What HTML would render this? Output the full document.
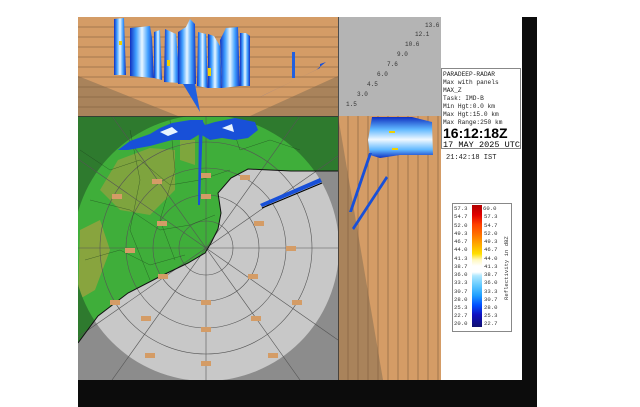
<!DOCTYPE html>
<html><head><meta charset="utf-8"><style>
html,body{margin:0;padding:0;background:#fff;width:640px;height:407px;overflow:hidden}
svg{display:block}
text{font-family:"Liberation Mono",monospace}
</style></head><body>
<svg width="640" height="407" viewBox="0 0 640 407" xmlns="http://www.w3.org/2000/svg">
<defs>
<clipPath id="mp"><rect x="78" y="116" width="260" height="264"/></clipPath>
<clipPath id="cir"><circle cx="206" cy="248" r="133"/></clipPath>
<linearGradient id="cb" x1="0" y1="0" x2="0" y2="1">
<stop offset="0" stop-color="#b00000"/><stop offset="0.08" stop-color="#e00000"/><stop offset="0.16" stop-color="#ff4000"/><stop offset="0.24" stop-color="#ff7000"/><stop offset="0.32" stop-color="#ffa800"/><stop offset="0.40" stop-color="#ffe000"/><stop offset="0.45" stop-color="#fff8c0"/><stop offset="0.5" stop-color="#fff"/><stop offset="0.55" stop-color="#fff"/><stop offset="0.58" stop-color="#b0e8ff"/><stop offset="0.66" stop-color="#60c8ff"/><stop offset="0.74" stop-color="#20a0ff"/><stop offset="0.82" stop-color="#0050ff"/><stop offset="0.9" stop-color="#1010c0"/><stop offset="1" stop-color="#101070"/>
</linearGradient>
<linearGradient id="col" x1="0" y1="0" x2="1" y2="0">
<stop offset="0" stop-color="#1030c0"/><stop offset="0.25" stop-color="#40a0ff"/><stop offset="0.5" stop-color="#e8f6ff"/><stop offset="0.75" stop-color="#40a0ff"/><stop offset="1" stop-color="#1030c0"/>
</linearGradient>
<linearGradient id="rh" x1="0" y1="0" x2="0" y2="1">
<stop offset="0" stop-color="#1030c0"/><stop offset="0.3" stop-color="#60b8ff"/><stop offset="0.55" stop-color="#f0f8ff"/><stop offset="0.8" stop-color="#60b8ff"/><stop offset="1" stop-color="#1030c0"/>
</linearGradient>
</defs>
<rect x="78" y="380" width="459" height="27" fill="#0c0c0c"/>
<rect x="522" y="17" width="15" height="390" fill="#0c0c0c"/>
<!-- top panel -->
<rect x="78" y="17" width="260" height="99" fill="#d49c66"/>
<polygon points="78,76 178,116 250,116 338,76 338,116 78,116" fill="#a9835b"/>
<g stroke="#7a5a3a" stroke-width="0.8" opacity="0.7">
<line x1="78" y1="27" x2="338" y2="27"/><line x1="78" y1="37" x2="338" y2="37"/><line x1="78" y1="47" x2="338" y2="47"/><line x1="78" y1="57" x2="338" y2="57"/><line x1="78" y1="67" x2="338" y2="67"/><line x1="78" y1="77" x2="338" y2="77"/><line x1="78" y1="87" x2="338" y2="87"/><line x1="78" y1="97" x2="338" y2="97"/><line x1="78" y1="107" x2="338" y2="107"/>
</g>
<g>
<path d="M114,19 L124,18 L126,75 L114,75 Z" fill="url(#col)"/>
<path d="M130,28 L150,26 L152,38 L154,78 L130,76 Z" fill="url(#col)"/>
<path d="M154,32 L160,30 L162,80 L154,78 Z" fill="url(#col)"/>
<path d="M165,29 L176,34 L180,83 L164,82 Z" fill="url(#col)"/>
<path d="M178,32 L186,27 L190,19 L195,24 L196,84 L178,84 Z" fill="url(#col)"/>
<path d="M183,84 L195,84 L200,112 Z" fill="#2060e0"/>
<path d="M198,32 L206,34 L208,88 L197,86 Z" fill="url(#col)"/>
<path d="M208,34 L214,36 L220,46 L222,88 L208,88 Z" fill="url(#col)"/>
<path d="M220,40 L226,28 L238,27 L240,86 L222,88 Z" fill="url(#col)"/>
<path d="M240,33 L246,33 L250,36 L250,86 L240,86 Z" fill="url(#col)"/>
<rect x="119" y="41" width="3" height="4" fill="#f0d000"/><rect x="167" y="60" width="3" height="6" fill="#f0d000"/><rect x="208" y="68" width="3" height="8" fill="#f0d000"/>
<rect x="292" y="52" width="3" height="26" fill="#2060e0"/>
<path d="M258,98 L320,68 L320,64 L326,62 L316,70 L264,95 Z" fill="#1850d8"/>
</g>
<rect x="338" y="17" width="103" height="99" fill="#b4b4b4"/>
<g font-size="6" fill="#333">
<text x="425" y="27">13.6</text><text x="415" y="36">12.1</text><text x="405" y="46">10.6</text><text x="397" y="56">9.0</text><text x="387" y="66">7.6</text><text x="377" y="76">6.0</text><text x="367" y="86">4.5</text><text x="357" y="96">3.0</text><text x="346" y="106">1.5</text>
</g>
<!-- right panel -->
<rect x="338" y="116" width="103" height="264" fill="#d49c66"/>
<polygon points="338,116 338,380 383,380" fill="#a9835b"/>
<g stroke="#7a5a3a" stroke-width="0.8" opacity="0.7">
<line x1="348" y1="116" x2="348" y2="380"/><line x1="358" y1="116" x2="358" y2="380"/><line x1="368" y1="116" x2="368" y2="380"/><line x1="378" y1="116" x2="378" y2="380"/><line x1="388" y1="116" x2="388" y2="380"/><line x1="398" y1="116" x2="398" y2="380"/><line x1="408" y1="116" x2="408" y2="380"/><line x1="418" y1="116" x2="418" y2="380"/><line x1="428" y1="116" x2="428" y2="380"/><line x1="438" y1="116" x2="438" y2="380"/>
</g>
<path d="M372,117 L412,117 L432,122 L433,155 L400,155 L380,158 L370,155 L368,140 Z" fill="url(#rh)"/>
<rect x="389" y="131" width="6" height="2" fill="#f0d000"/><rect x="392" y="148" width="6" height="2" fill="#f0d000"/>
<path d="M369,153 L372,153 L352,212 L349,212 Z M386,176 L388,178 L354,230 L352,228 Z" fill="#1850d8"/>
<!-- map -->
<g clip-path="url(#mp)">
<rect x="78" y="116" width="260" height="264" fill="#8c8c8c"/>
<circle cx="206" cy="248" r="133" fill="#c8c8c8"/>
<polygon points="78,116 338,116 338,171 291,171 248,169 231,178 218,193 221,213 218,229 211,243 205,253 188,263 161,276 128,293 98,316 78,343" fill="#2e7a2e"/>
<g clip-path="url(#cir)">
<polygon points="78,116 338,116 338,171 291,171 248,169 231,178 218,193 221,213 218,229 211,243 205,253 188,263 161,276 128,293 98,316 78,343" fill="#3fae3a"/>
<path d="M118,160 L150,148 L175,150 L175,190 L150,215 L120,210 L100,190 Z" fill="#9aa040" opacity="0.7"/>
<path d="M80,230 L100,220 L110,250 L95,290 L78,300 Z" fill="#a8a040" opacity="0.7"/>
<path d="M180,140 L195,140 L195,165 L180,160 Z" fill="#a8a040" opacity="0.6"/>
</g>
<g fill="none" stroke="#555" stroke-width="0.6">
<circle cx="206" cy="248" r="27"/><circle cx="206" cy="248" r="53"/><circle cx="206" cy="248" r="80"/><circle cx="206" cy="248" r="106"/>
<line x1="206" y1="116" x2="206" y2="380"/><line x1="78" y1="248" x2="338" y2="248"/>
<line x1="206" y1="248" x2="300" y2="380"/><line x1="206" y1="248" x2="112" y2="380"/><line x1="206" y1="248" x2="338" y2="340"/><line x1="206" y1="248" x2="78" y2="337"/>
<line x1="206" y1="248" x2="338" y2="156"/><line x1="206" y1="248" x2="112" y2="116"/><line x1="206" y1="248" x2="300" y2="116"/><line x1="206" y1="248" x2="78" y2="159"/>
</g>
<g fill="none" stroke="#1a3a1a" stroke-width="0.5" opacity="0.6">
<path d="M80,150 L110,170 L140,160 L170,185 L200,180 L230,170"/><path d="M90,200 L130,210 L160,230 L190,225 L215,215"/><path d="M85,260 L120,250 L150,265 L185,255"/><path d="M130,130 L140,180 L130,230 L150,280"/><path d="M170,120 L175,170 L160,220 L175,260"/><path d="M230,120 L240,150 L270,140 L300,150"/>
</g>
<polyline points="338,171 291,171 248,169 231,178 218,193 221,213 218,229 211,243 205,253 188,263 161,276 128,293 98,316 78,343" fill="none" stroke="#111" stroke-width="1"/>
<path d="M118,150 L130,141 L150,134 L160,128 L172,123 L190,120 L202,120 L205,125 L215,122 L235,118 L255,122 L258,130 L248,138 L235,140 L222,138 L210,140 L200,134 L190,140 L172,140 L150,146 L128,150 Z" fill="#1850d8"/>
<path d="M160,132 L172,127 L178,132 L168,136 Z M222,128 L232,124 L234,132 Z" fill="#e8f4ff"/>
<path d="M199,120 L203,120 L200,205 L198,205 Z" fill="#1850d8"/>
<path d="M260,204 L320,178 L322,182 L262,207 Z" fill="#1850d8"/>
<line x1="262" y1="208" x2="322" y2="183" stroke="#000" stroke-width="1.2"/>
<g fill="#d49c66">
<rect x="201" y="173" width="10" height="5"/><rect x="240" y="175" width="10" height="5"/>
<rect x="152" y="179" width="10" height="5"/><rect x="201" y="194" width="10" height="5"/>
<rect x="112" y="194" width="10" height="5"/><rect x="157" y="221" width="10" height="5"/>
<rect x="254" y="221" width="10" height="5"/><rect x="286" y="246" width="10" height="5"/>
<rect x="125" y="248" width="10" height="5"/><rect x="158" y="274" width="10" height="5"/>
<rect x="248" y="274" width="10" height="5"/><rect x="201" y="300" width="10" height="5"/>
<rect x="110" y="300" width="10" height="5"/><rect x="292" y="300" width="10" height="5"/>
<rect x="141" y="316" width="10" height="5"/><rect x="251" y="316" width="10" height="5"/>
<rect x="201" y="327" width="10" height="5"/><rect x="145" y="353" width="10" height="5"/>
<rect x="268" y="353" width="10" height="5"/><rect x="201" y="361" width="10" height="5"/>
</g>
</g>
<rect x="338" y="17" width="0.8" height="363" fill="#333"/>
<rect x="78" y="116" width="260" height="0.8" fill="#333"/>
<!-- info box -->
<rect x="441.5" y="68.5" width="79" height="80" fill="#fff" stroke="#888"/>
<g font-size="6.2" fill="#222">
<text x="443" y="76">PARADEEP-RADAR</text><text x="443" y="84">Max with panels</text><text x="443" y="92">MAX_Z</text><text x="443" y="100">Task: IMD-B</text><text x="443" y="108">Min Hgt:0.0 km</text><text x="443" y="116">Max Hgt:15.0 km</text><text x="443" y="124">Max Range:250 km</text>
</g>
<text x="443" y="138" font-size="14" font-weight="bold" fill="#000" style="font-family:'Liberation Sans',sans-serif">16:12:18Z</text>
<text x="443" y="147" font-size="8.5" fill="#000" textLength="77">17 MAY 2025 UTC</text>
<text x="446" y="159" font-size="7" fill="#222">21:42:18 IST</text>
<!-- legend -->
<rect x="452.5" y="203.5" width="59" height="128" fill="#fff" stroke="#888"/>
<rect x="472" y="205" width="10" height="122" fill="url(#cb)"/>
<g font-size="5.6" fill="#333">
<text x="454" y="210">57.3</text><text x="454" y="218">54.7</text><text x="454" y="227">52.0</text><text x="454" y="235">49.3</text><text x="454" y="243">46.7</text><text x="454" y="251">44.0</text><text x="454" y="260">41.3</text><text x="454" y="268">38.7</text><text x="454" y="276">36.0</text><text x="454" y="284">33.3</text><text x="454" y="293">30.7</text><text x="454" y="301">28.0</text><text x="454" y="309">25.3</text><text x="454" y="317">22.7</text><text x="454" y="325">20.0</text>
<text x="483" y="210">60.0</text><text x="484" y="218">57.3</text><text x="484" y="227">54.7</text><text x="484" y="235">52.0</text><text x="484" y="243">49.3</text><text x="484" y="251">46.7</text><text x="484" y="260">44.0</text><text x="484" y="268">41.3</text><text x="484" y="276">38.7</text><text x="484" y="284">36.0</text><text x="484" y="293">33.3</text><text x="484" y="301">30.7</text><text x="484" y="309">28.0</text><text x="484" y="317">25.3</text><text x="484" y="325">22.7</text>
</g>
<text transform="translate(508,300) rotate(-90)" font-size="5.6" fill="#333">Reflectivity in dBZ</text>
</svg>
</body></html>
